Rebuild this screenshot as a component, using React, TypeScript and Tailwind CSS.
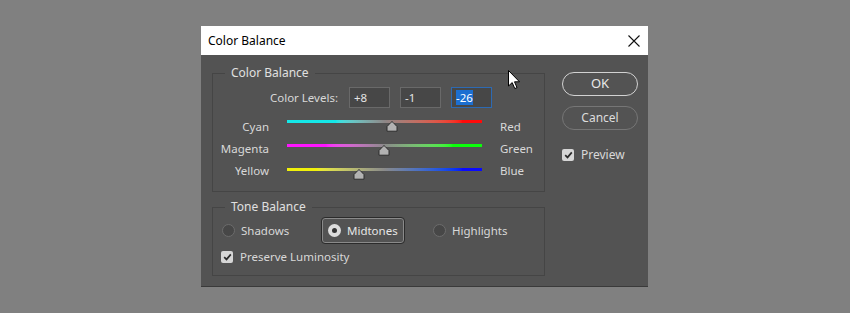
import React from 'react';

const levels = [8, -1, -26];

const sliders = [
    { left: 'Cyan', right: 'Red', value: 8, top: 'top-[4px]', track: 'bg-linear-to-r from-[#14e8e8] from-25% via-[#8c8787] via-50% to-[#ff0a0a] to-90%' },
    { left: 'Magenta', right: 'Green', value: -1, top: 'top-[6px]', track: 'bg-linear-to-r from-[#ff14ff] from-20% via-[#8a8a8a] via-50% to-[#0aff0a] to-85%' },
    { left: 'Yellow', right: 'Blue', value: -26, top: 'top-[8px]', track: 'bg-linear-to-r from-[#f0f00a] from-15% via-[#8a8a8a] via-50% to-[#0a0aff] to-90%' },
];

function Thumb() {
    return (
        <svg width="12" height="11" viewBox="0 0 12 11">
            <path d="M6 0.8 Q6.6 0.8 7.2 1.5 L11 5.6 V10.2 H1 V5.6 L4.8 1.5 Q5.4 0.8 6 0.8 Z" fill="#b2b2b2" stroke="#2c2c2c" strokeWidth="1" />
        </svg>
    );
}

function SliderRow({ left, right, value, top, track }: { left: string; right: string; value: number; top: string; track: string }) {
    const pct = ((value + 100) / 200) * 100;
    return (
        <div className="flex h-[22px] items-center">
            <div className="w-[56px] text-right">{left}</div>
            <div className="relative ml-[18px] h-full w-[195px]">
                <div className={`absolute left-0 right-0 h-[3px] ${top} ${track}`} />
                <div className={`absolute -translate-x-1/2 ${top}`} style={{ left: `${pct}%` }}>
                    <div className="mt-[1px]">
                        <Thumb />
                    </div>
                </div>
            </div>
            <div className="ml-[18px]">{right}</div>
        </div>
    );
}

function Radio({ checked }: { checked?: boolean }) {
    if (checked) {
        return (
            <span className="flex h-[13px] w-[13px] items-center justify-center rounded-full bg-[#dcdcdc]">
                <span className="h-[5px] w-[5px] rounded-full bg-[#333]" />
            </span>
        );
    }
    return <span className="h-[13px] w-[13px] rounded-full border border-[#6c6c6c] bg-[#474747]" />;
}

function Checkbox() {
    return (
        <span className="flex h-[12px] w-[12px] items-center justify-center rounded-[2px] bg-[#d6d6d6]">
            <svg width="9" height="8" viewBox="0 0 9 8">
                <path d="M1.2 4.2 L3.5 6.4 L7.8 1.4" fill="none" stroke="#2a2a2a" strokeWidth="1.7" />
            </svg>
        </span>
    );
}

function Group({ title, className, children }: { title: string; className: string; children: React.ReactNode }) {
    return (
        <div className={`relative border border-[#454545] ${className}`}>
            <span className="absolute -top-[9px] left-[12px] bg-[#535353] px-[6px] text-[12px] leading-[16px] text-[#e0e0e0]">{title}</span>
            {children}
        </div>
    );
}

export default function App() {
    return (
        <div className="h-[313px] w-[850px] overflow-hidden bg-[#808080] pl-[201px] pt-[26px] font-['Noto_Sans',sans-serif] text-[11.5px] text-[#d8d8d8]">
            <div className="relative h-[261px] w-[447px] border-b border-[#3a3a3a] bg-[#535353]">
                <div className="flex h-[29px] items-center justify-between bg-white pl-[7px] pr-[8px] text-[12px] text-black">
                    <span>Color Balance</span>
                    <svg width="12" height="12" viewBox="0 0 12 12">
                        <path d="M0.5 0.5 L11.5 11.5 M11.5 0.5 L0.5 11.5" stroke="#111" strokeWidth="1.1" />
                    </svg>
                </div>

                <div className="flex pl-[11px] pt-[18px]">
                    <div className="w-[333px]">
                        <Group title="Color Balance" className="h-[119px]">
                            <div className="flex items-center pt-[13px]">
                                <div className="w-[125px] text-right">Color Levels:</div>
                                <div className="ml-[11px] flex gap-[10px]">
                                    {levels.map((v, i) => (
                                        <div
                                            key={i}
                                            className={`flex h-[21px] w-[41px] items-center border pl-[4px] ${i === 2 ? 'border-[#2d6ab3] bg-[#474747]' : 'border-[#696969] bg-[#474747]'}`}
                                        >
                                            {i === 2 ? (
                                                <span className="bg-[#1c6fd1] leading-[15px] text-white">{v}</span>
                                            ) : (
                                                <span className="text-[#e4e4e4]">{v > 0 ? `+${v}` : v}</span>
                                            )}
                                        </div>
                                    ))}
                                </div>
                            </div>
                            <div className="mt-[8px]">
                                {sliders.map(s => (
                                    <SliderRow key={s.left} {...s} />
                                ))}
                            </div>
                        </Group>

                        <Group title="Tone Balance" className="mt-[15px] h-[69px]">
                            <div className="mt-[9px] flex h-[27px] items-center pl-[9px]">
                                <div className="flex w-[99px] items-center gap-[6px]">
                                    <Radio />
                                    <span>Shadows</span>
                                </div>
                                <div className="flex h-[27px] w-[84px] items-center gap-[6px] rounded-[4px] border border-[#2b2b2b] pl-[6px] shadow-[inset_0_0_0_1px_#8a8a8a]">
                                    <Radio checked />
                                    <span className="text-[#e6e6e6]">Midtones</span>
                                </div>
                                <div className="ml-[28px] flex items-center gap-[6px]">
                                    <Radio />
                                    <span>Highlights</span>
                                </div>
                            </div>
                            <div className="mt-[5px] flex h-[16px] items-center gap-[7px] pl-[8px]">
                                <Checkbox />
                                <span>Preserve Luminosity</span>
                            </div>
                        </Group>
                    </div>

                    <div className="ml-[17px] -mt-[1px] flex w-[76px] flex-col">
                        <button className="h-[24px] rounded-full border-[1.5px] border-[#d2d2d2] text-[13px] text-[#e8e8e8]">OK</button>
                        <button className="mt-[10px] h-[24px] rounded-full border-[1.5px] border-[#767676] text-[12px] text-[#dcdcdc]">Cancel</button>
                        <div className="mt-[16px] flex items-center gap-[7px]">
                            <Checkbox />
                            <span className="text-[12px]">Preview</span>
                        </div>
                    </div>
                </div>

                <svg className="absolute left-[307px] top-[44px]" width="13" height="20" viewBox="0 0 13 20">
                    <path d="M0.5 0.5 V16 L4.2 12.6 L6.8 18.6 L9 17.6 L6.5 11.8 H11.5 Z" fill="#fff" stroke="#000" strokeWidth="1" />
                </svg>
            </div>
        </div>
    );
}
